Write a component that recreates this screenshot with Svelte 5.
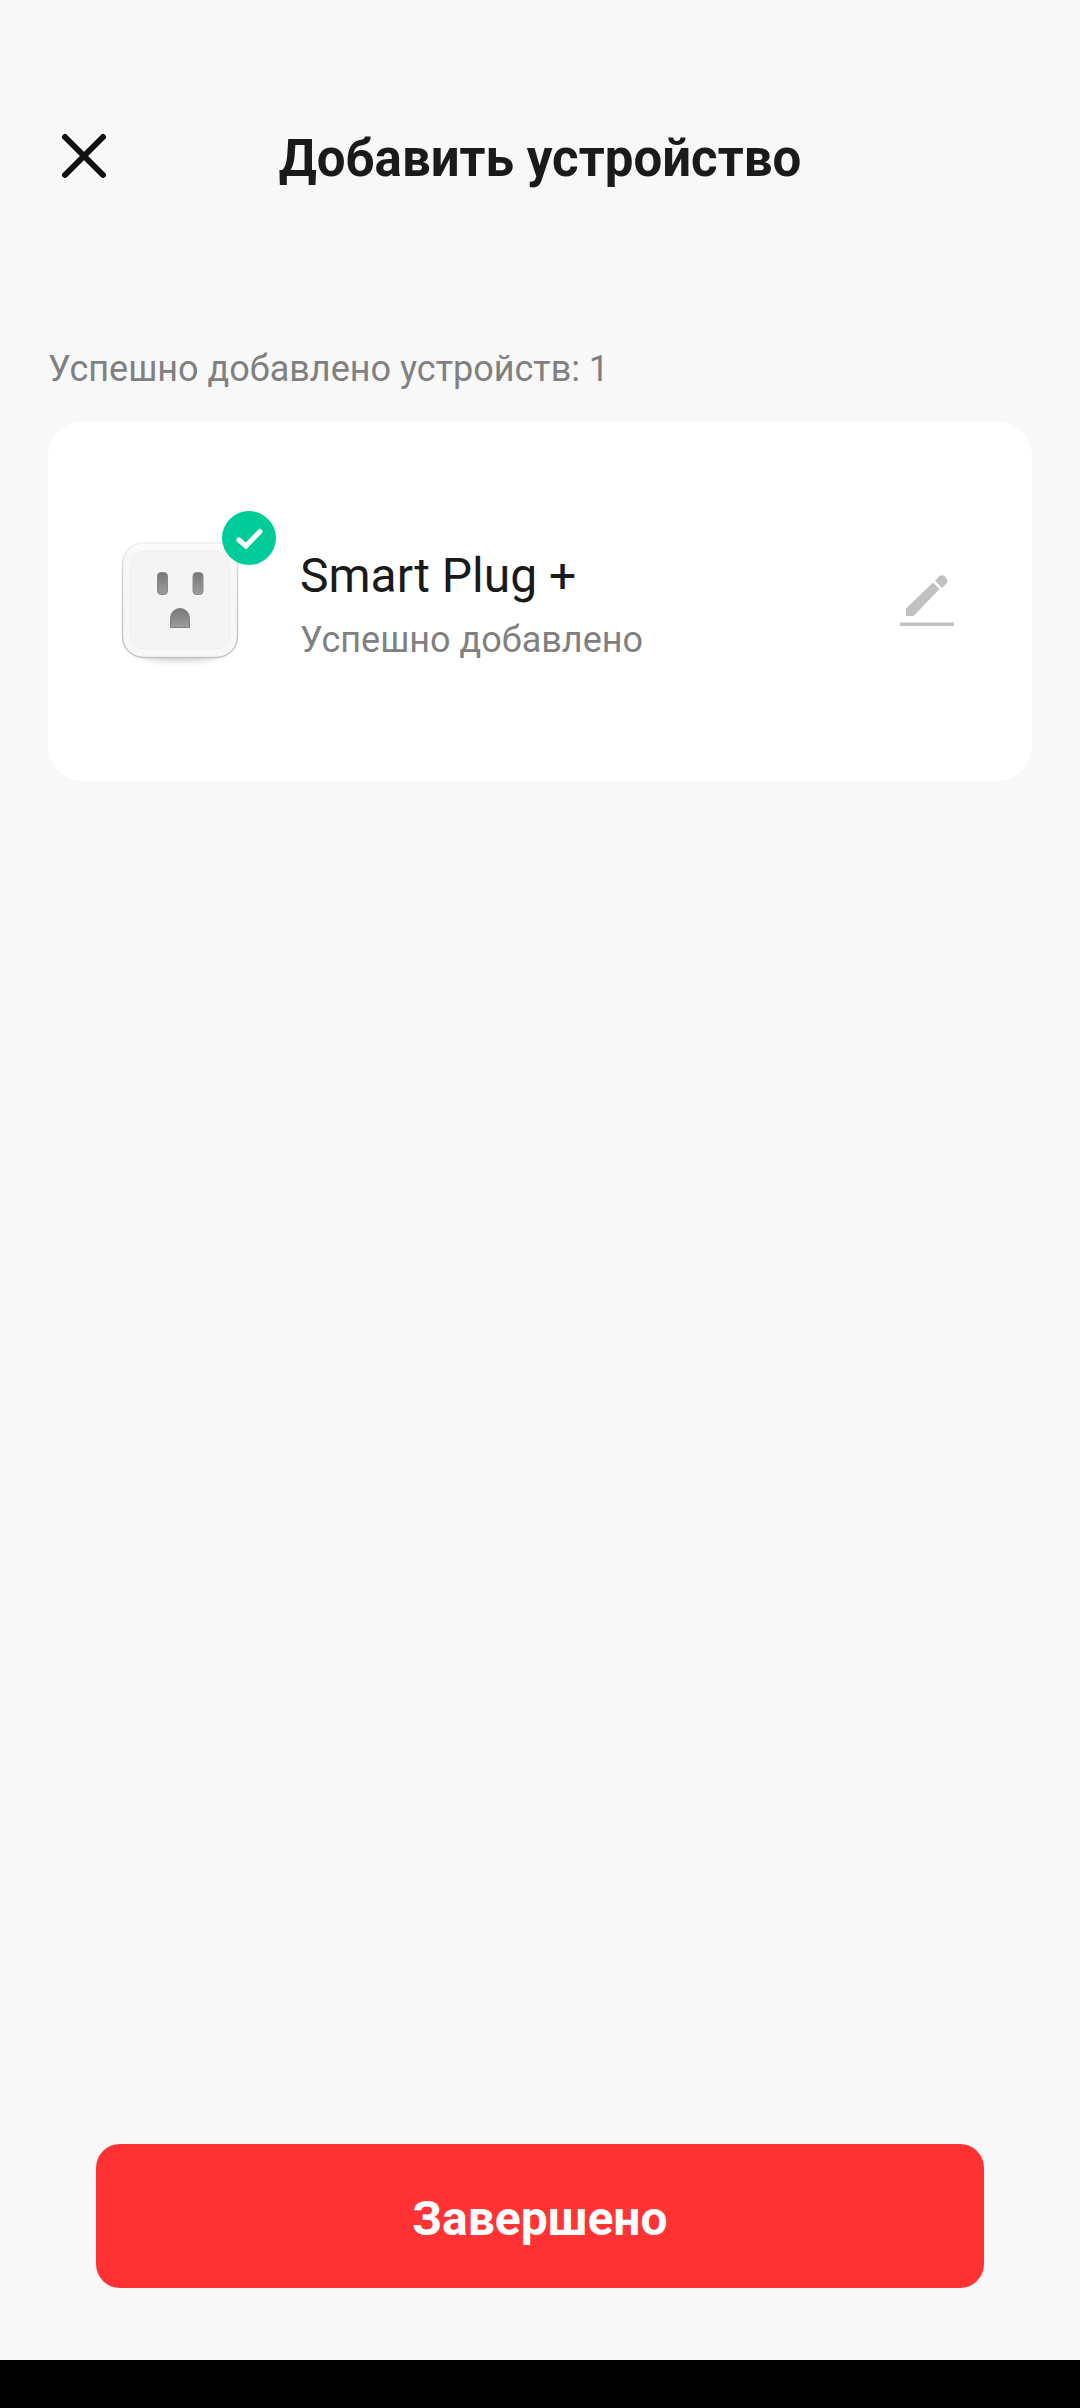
<script lang="ts">
	type Device = { id: number; name: string; status: string }

	let devices: Device[] = $state([
		{ id: 1, name: 'Smart Plug +', status: 'Успешно добавлено' }
	])
</script>

<div class="page">
	<header>
		<button type="button" class="close" aria-label="Закрыть">
			<svg viewBox="0 0 48 48" width="48" height="48">
				<path d="M5 5L43 43M43 5L5 43" fill="none" stroke="#111" stroke-width="6" stroke-linecap="round" />
			</svg>
		</button>
		<h1>Добавить устройство</h1>
	</header>

	<main>
		<h2>Успешно добавлено устройств: {devices.length}</h2>
		<ul>
			{#each devices as device (device.id)}
				<li class="card">
					<div class="picture">
						<svg viewBox="0 0 120 126" width="120" height="126">
							<defs>
								<linearGradient id="edge" x1="0" y1="0" x2="0" y2="1">
									<stop offset="0" stop-color="#f0f0f0" />
									<stop offset="0.3" stop-color="#cfcfcf" />
									<stop offset="1" stop-color="#c4c4c4" />
								</linearGradient>
								<linearGradient id="shell" x1="0" y1="0" x2="0" y2="1">
									<stop offset="0" stop-color="#fdfdfd" />
									<stop offset="0.1" stop-color="#f7f7f7" />
									<stop offset="1" stop-color="#f7f7f7" />
								</linearGradient>
								<linearGradient id="hole" x1="0" y1="0" x2="0" y2="1">
									<stop offset="0" stop-color="#777" />
									<stop offset="1" stop-color="#9c9c9c" />
								</linearGradient>
								<filter id="soft" x="-20%" y="-100%" width="140%" height="300%">
									<feGaussianBlur stdDeviation="3" />
								</filter>
							</defs>
							<ellipse cx="60" cy="116" rx="38" ry="5" fill="#000" opacity="0.2" filter="url(#soft)" />
							<rect x="2.5" y="3" width="115" height="114.5" rx="21" fill="url(#shell)" stroke="url(#edge)" stroke-width="1.4" />
							<rect x="10.5" y="11" width="99" height="98.5" rx="16" fill="#f4f4f4" stroke="#eee" />
							<rect x="37.5" y="32.5" width="10" height="22" rx="3.5" fill="url(#hole)" stroke="#888" />
							<rect x="73" y="32.5" width="10" height="22" rx="3.5" fill="url(#hole)" stroke="#888" />
							<path d="M50.5 87.5V78a9.5 9.5 0 0 1 19 0v9.5z" fill="url(#hole)" stroke="#808080" />
						</svg>
						<svg class="badge" viewBox="0 0 54 54" width="54" height="54">
							<circle cx="27" cy="27" r="27" fill="#00cc99" />
							<path d="M17 29L24 35L38 20.5" fill="none" stroke="#fff" stroke-width="5" stroke-linecap="round" />
						</svg>
					</div>
					<div class="info">
						<span class="name">{device.name}</span>
						<span class="status">{device.status}</span>
					</div>
					<button type="button" class="edit" aria-label="Переименовать">
						<svg viewBox="0 0 54 54" width="54" height="54">
							<g fill="#c1c1c1">
								<path d="M6 34.500L33 8.500L39.500 15L13.500 42H6z" />
								<path d="M35 6.500L39 2.500Q42 0 45 2.500Q49 6.500 46.500 9.500L42 14z" />
								<rect x="0" y="48.5" width="54" height="3.5" />
							</g>
						</svg>
					</button>
				</li>
			{/each}
		</ul>
	</main>

	<footer>
		<button type="button" class="done">Завершено</button>
	</footer>
	<div class="navbar"></div>
</div>

<style>
	:global(body) {
		background: #f8f8f8;
	}

	.page {
		display: flex;
		flex-direction: column;
		min-height: 100vh;
		background: #f8f8f8;
		color: #1a1a1a;
		font-family: Roboto, "Noto Sans", sans-serif;
	}

	button {
		padding: 0;
		border: none;
		background: none;
		font-family: inherit;
		cursor: pointer;
	}

	svg {
		display: block;
	}

	header {
		display: grid;
		grid-template-columns: 1fr auto 1fr;
		align-items: center;
		height: 120px;
		padding: 96px 60px 0;
	}

	.close {
		justify-self: start;
	}

	h1 {
		margin: 0;
		padding-top: 6px;
		font-size: 51px;
		line-height: 64px;
		font-weight: 700;
	}

	main {
		flex: 1;
		padding: 129px 48px 48px;
	}

	h2 {
		margin: 0 0 28px;
		font-size: 36px;
		line-height: 48px;
		font-weight: 400;
		color: #808080;
	}

	ul {
		margin: 0;
		padding: 0;
		list-style: none;
	}

	.card {
		display: flex;
		align-items: center;
		gap: 60px;
		box-sizing: border-box;
		min-height: 360px;
		padding: 0 78px 0 72px;
		border-radius: 36px;
		background: #fff;
	}

	.picture {
		position: relative;
		padding-top: 4px;
	}

	/* sits over the top right corner of the device picture */
	.badge {
		position: absolute;
		top: -25px;
		right: -36px;
	}

	.info {
		display: flex;
		flex: 1;
		flex-direction: column;
		gap: 8px;
		padding-top: 6px;
	}

	.name {
		font-size: 48px;
		line-height: 64px;
	}

	.status {
		font-size: 36px;
		line-height: 48px;
		color: #808080;
	}

	footer {
		display: flex;
		padding: 0 96px 72px;
	}

	.done {
		flex: 1;
		height: 144px;
		padding-top: 4px;
		border-radius: 24px;
		background: #ff3333;
		color: #fff;
		font-size: 48px;
		font-weight: 700;
	}

	.navbar {
		height: 48px;
		background: #000;
	}
</style>
